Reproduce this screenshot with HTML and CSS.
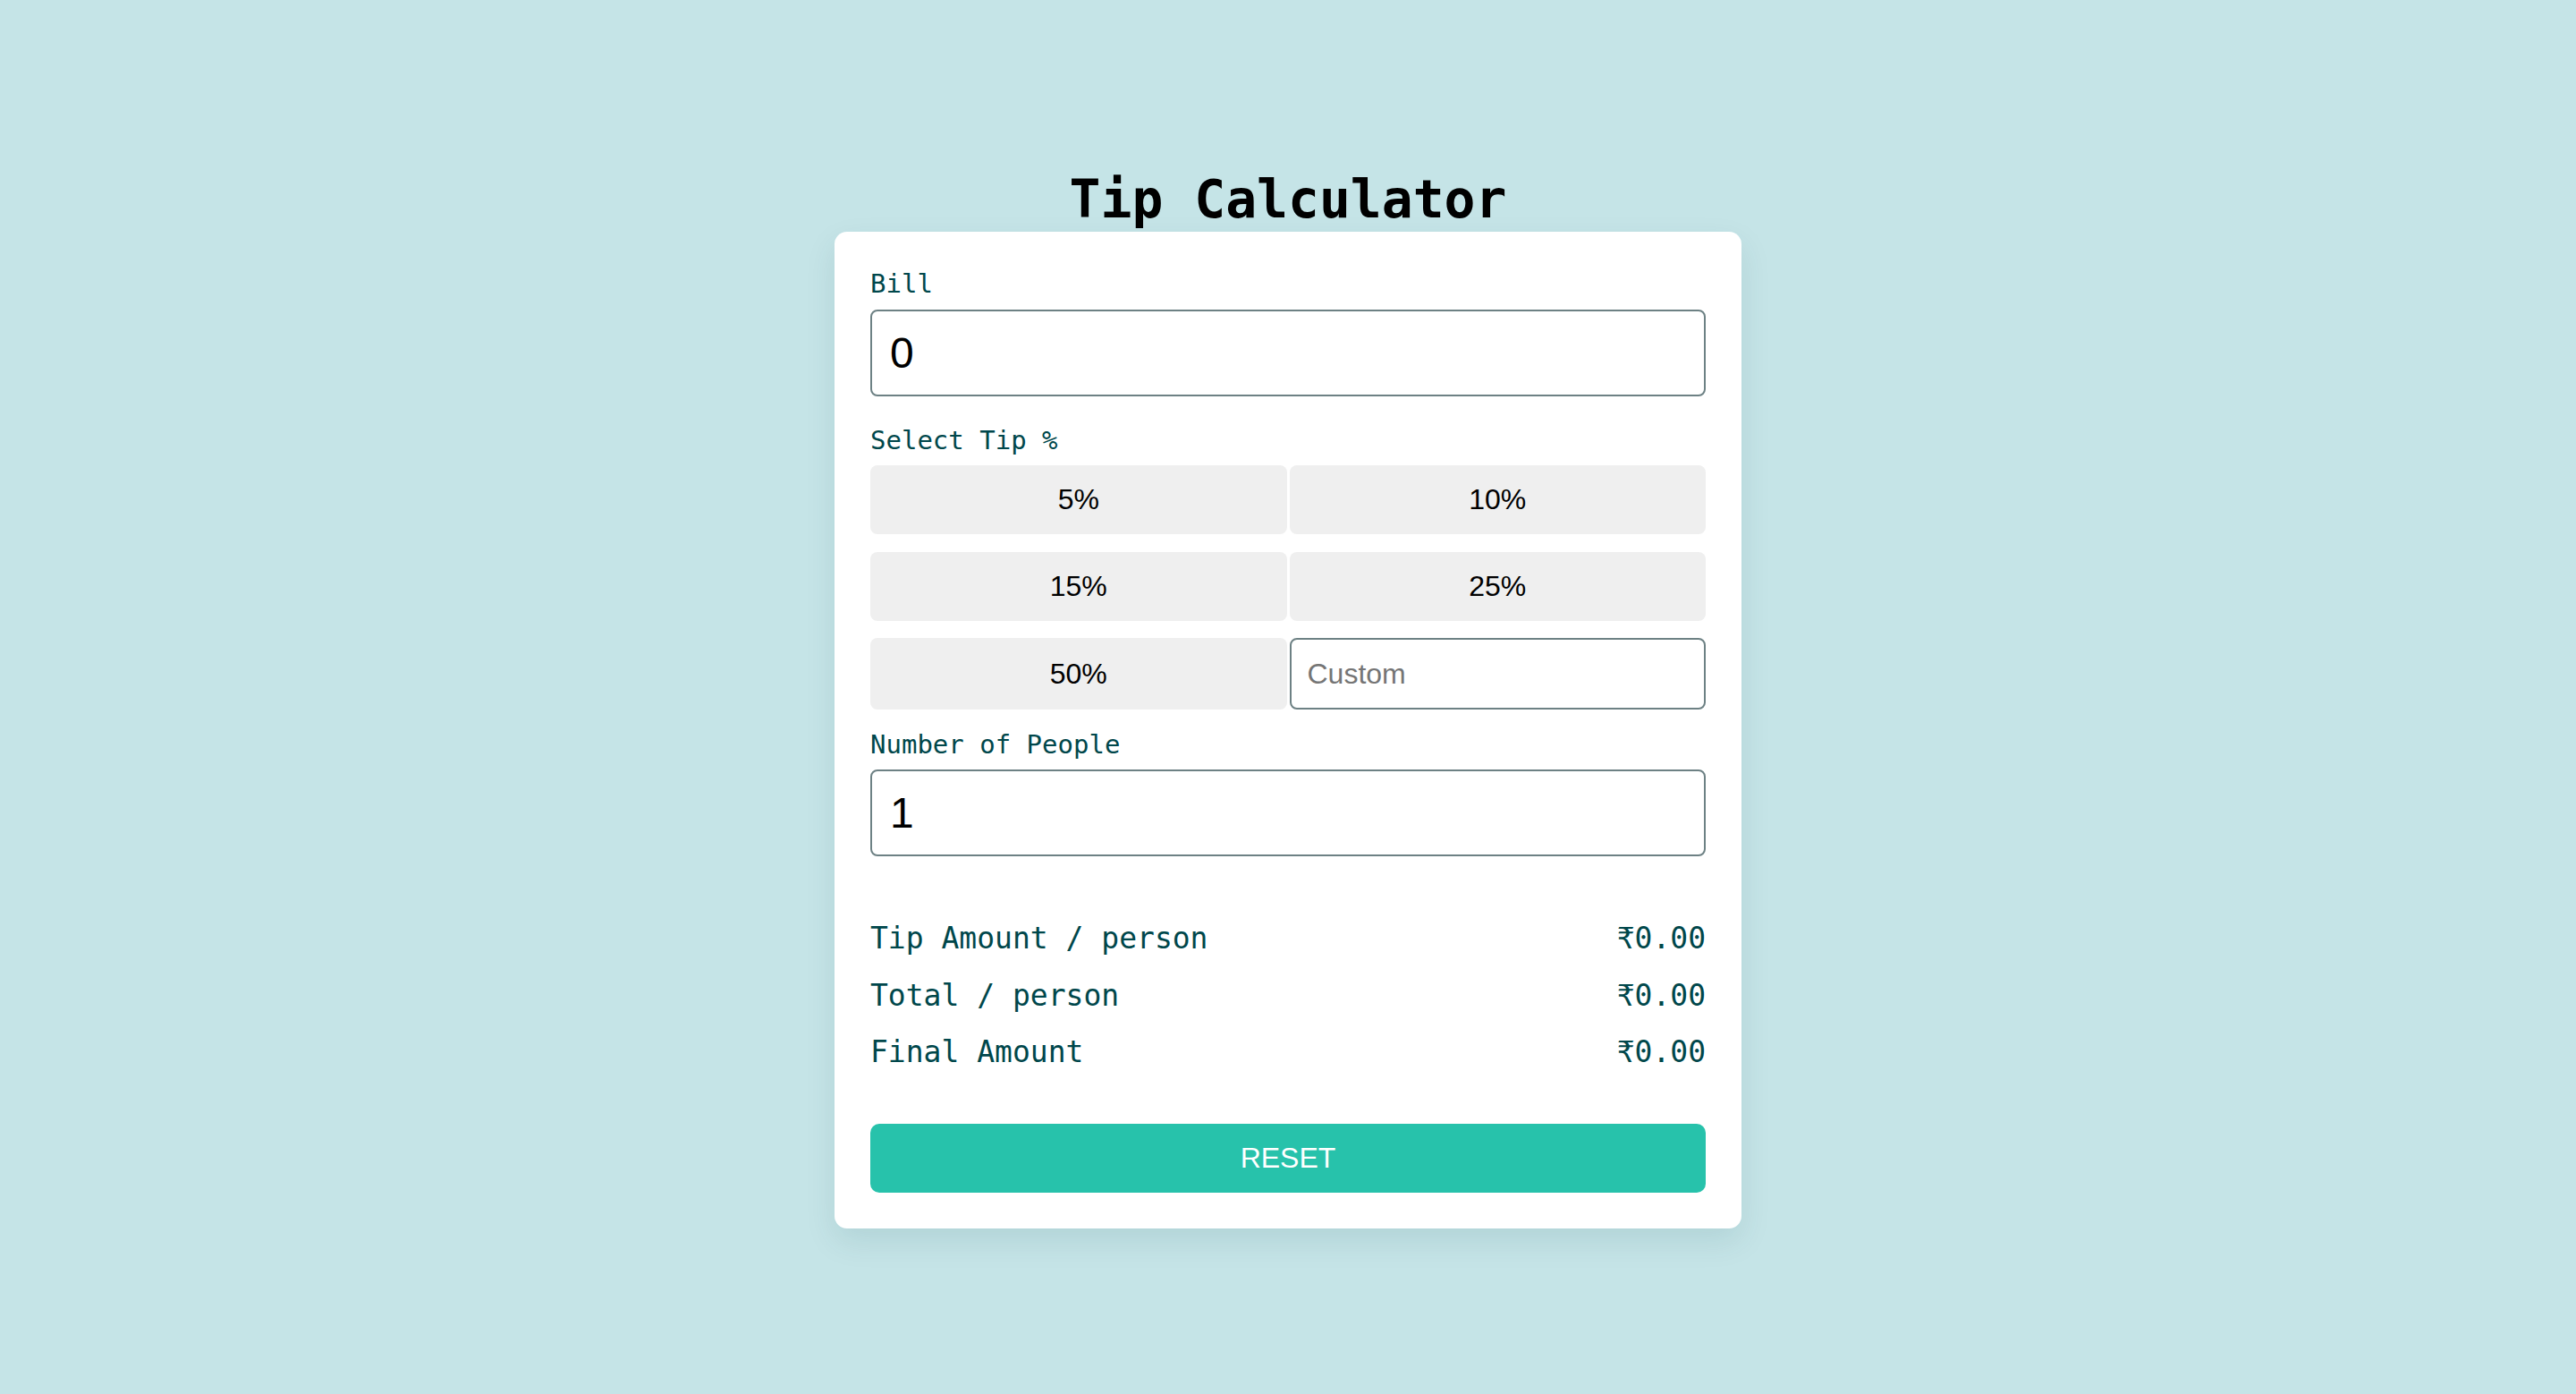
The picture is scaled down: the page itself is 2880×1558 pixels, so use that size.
FILE: index.html
```html
<!DOCTYPE html>
<html lang="en">
<head>
<meta charset="utf-8">
<title>Tip Calculator</title>
<link rel="stylesheet" href="styles.css">
</head>
<body>
<div class="app">
  <h1 class="title">Tip Calculator</h1>
  <div class="card">
    <label class="label" for="bill">Bill</label>
    <input class="field" id="bill" type="text" value="0">

    <div class="label label-tip">Select Tip %</div>
    <div class="tips">
      <button class="tip">5%</button>
      <button class="tip">10%</button>
      <button class="tip">15%</button>
      <button class="tip">25%</button>
      <button class="tip">50%</button>
      <input class="custom" type="text" placeholder="Custom">
    </div>

    <label class="label label-people" for="people">Number of People</label>
    <input class="field" id="people" type="text" value="1">

    <div class="results">
      <div class="row"><span>Tip Amount / person</span><span>₹0.00</span></div>
      <div class="row"><span>Total / person</span><span>₹0.00</span></div>
      <div class="row"><span>Final Amount</span><span>₹0.00</span></div>
    </div>

    <button class="reset">RESET</button>
  </div>
</div>
</body>
</html>
```

FILE: styles.css
```css
html, body {
  margin: 0;
  padding: 0;
}

body {
  background: #c5e4e7;
  min-height: 100vh;
  font-family: "DejaVu Sans Mono", "Liberation Mono", monospace;
}

.app {
  display: flex;
  flex-direction: column;
  align-items: center;
  padding-top: 189px;
}

.title {
  margin: 0 0 2px;
  font-size: 58px;
  line-height: 68px;
  font-weight: 700;
  color: #000;
}

.card {
  width: 1014px;
  box-sizing: border-box;
  padding: 41px 40px 40px;
  background: #ffffff;
  border-radius: 14px;
  box-shadow: 0 14px 34px rgba(0, 70, 80, 0.10);
  display: flex;
  flex-direction: column;
}

.label {
  display: block;
  font-size: 29px;
  line-height: 34px;
  color: #00474b;
  margin-bottom: 12px;
}

.label-tip {
  margin-top: 32px;
  margin-bottom: 11px;
}

.label-people {
  margin-top: 22px;
  margin-bottom: 11px;
}

.field {
  display: block;
  width: 100%;
  height: 97px;
  box-sizing: border-box;
  border: 2px solid #6d8184;
  border-radius: 8px;
  padding: 0 20px;
  font-family: "Liberation Sans", Arial, sans-serif;
  font-size: 48px;
  color: #000;
  background: #fff;
  outline: none;
}

.tips {
  display: grid;
  grid-template-columns: 1fr 1fr;
  grid-template-rows: 77px 77px 80px;
  column-gap: 3px;
  row-gap: 19.5px;
}

.tip {
  border: none;
  border-radius: 8px;
  background: #efefef;
  color: #000;
  font-family: "Liberation Sans", Arial, sans-serif;
  font-size: 32px;
  padding: 0;
}

.custom {
  box-sizing: border-box;
  width: 100%;
  border: 2px solid #6d8184;
  border-radius: 8px;
  padding: 0 18px;
  font-family: "Liberation Sans", Arial, sans-serif;
  font-size: 32px;
  color: #000;
  background: #fff;
  outline: none;
}

.custom::placeholder {
  color: #757575;
}

.results {
  margin-top: 73px;
  display: flex;
  flex-direction: column;
  gap: 25.5px;
}

.row {
  display: flex;
  justify-content: space-between;
  font-size: 33px;
  line-height: 38px;
  color: #00474b;
}

.reset {
  margin-top: 61px;
  height: 77px;
  width: 100%;
  border: none;
  border-radius: 10px;
  background: #27c2ab;
  color: #ffffff;
  font-family: "Liberation Sans", Arial, sans-serif;
  font-size: 32px;
  padding: 0;
}
```
